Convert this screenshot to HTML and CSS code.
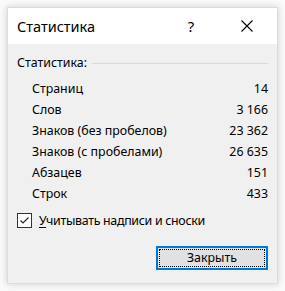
FILE: index.html
```html
<!DOCTYPE html>
<html lang="ru">

<head>
	<meta charset="UTF-8">
	<title>Статистика</title>
	<link rel="stylesheet" href="styles.css">
</head>

<body>
	<div class="window">
		<div class="titlebar">
			<span class="title">Статистика</span>
			<span class="help">?</span>
			<span class="close">
				<svg width="12" height="12" viewBox="0 0 12 12">
					<path d="M0.5 0.5 L11.5 11.5 M11.5 0.5 L0.5 11.5" stroke="#000" stroke-width="1.1" fill="none" />
				</svg>
			</span>
		</div>
		<div class="content">
			<div class="group">
				<span>Статистика:</span>
				<span class="rule"></span>
			</div>
			<ul class="stats">
				<li><span>Страниц</span><span>14</span></li>
				<li><span>Слов</span><span>3 166</span></li>
				<li><span>Знаков (без пробелов)</span><span>23 362</span></li>
				<li><span>Знаков (с пробелами)</span><span>26 635</span></li>
				<li><span>Абзацев</span><span>151</span></li>
				<li><span>Строк</span><span>433</span></li>
			</ul>
			<label class="check">
				<span class="box">
					<svg width="11" height="11" viewBox="0 0 11 11">
						<path d="M1.5 5.5 L4 8 L9.5 2.5" stroke="#222" stroke-width="1.1" fill="none" />
					</svg>
				</span>
				<span class="label"><u>У</u>читывать надписи и сноски</span>
			</label>
			<div class="buttons">
				<button class="btn"><span>Закрыть</span></button>
			</div>
		</div>
	</div>
</body>

</html>
```

FILE: styles.css
```css
body,
div,
ul,
li {
	margin: 0;
	padding: 0;
}

ul {
	list-style-type: none;
}

body {
	background: #fafafa;
	padding: 7px;
	font: 12.4px/21px "Noto Sans", "Open Sans", sans-serif;
	color: #000;
}

.window {
	width: 271px;
	height: 277px;
	background: #f0f0f0;
	box-shadow: 0 0 7px rgba(0, 0, 0, 0.18);
	border: 1px solid #dcdcdc;
	box-sizing: border-box;
	display: flex;
	flex-direction: column;
}

.titlebar {
	height: 36px;
	background: #fff;
	display: flex;
	align-items: center;
	padding-left: 9px;
}

.title {
	font-size: 14.5px;
	flex: 1;
}

.help {
	font-size: 15px;
	width: 20px;
	margin-right: 40px;
	text-align: center;
}

.close {
	width: 12px;
	height: 12px;
	margin-right: 24px;
	display: flex;
}

.content {
	padding: 8px 9px 0 9px;
}

.group {
	display: flex;
	align-items: center;
}

.group .rule {
	flex: 1;
	height: 1px;
	background: #d9d9d9;
	margin-left: 5px;
	margin-top: 1px;
}

.stats {
	margin-top: 5px;
	padding-left: 15px;
}

.stats li {
	display: flex;
	justify-content: space-between;
	height: 21px;
}

.check {
	display: flex;
	align-items: center;
	margin-top: 6px;
	height: 21px;
}

.check .box {
	width: 13px;
	height: 13px;
	border: 1px solid #333;
	background: #fff;
	display: flex;
	align-items: center;
	justify-content: center;
	margin-right: 7px;
}

.check .label {
	letter-spacing: -0.3px;
}

.check u {
	text-underline-offset: 2px;
}

.buttons {
	display: flex;
	justify-content: flex-end;
	margin-top: 15px;
}

.btn {
	width: 112px;
	height: 24px;
	border: 2px solid #0078d7;
	background: #e1e1e1;
	padding: 1px;
	font: inherit;
	color: #000;
	display: flex;
}

.btn span {
	flex: 1;
	border: 1px dotted #000;
	line-height: 16px;
	text-align: center;
}
```
